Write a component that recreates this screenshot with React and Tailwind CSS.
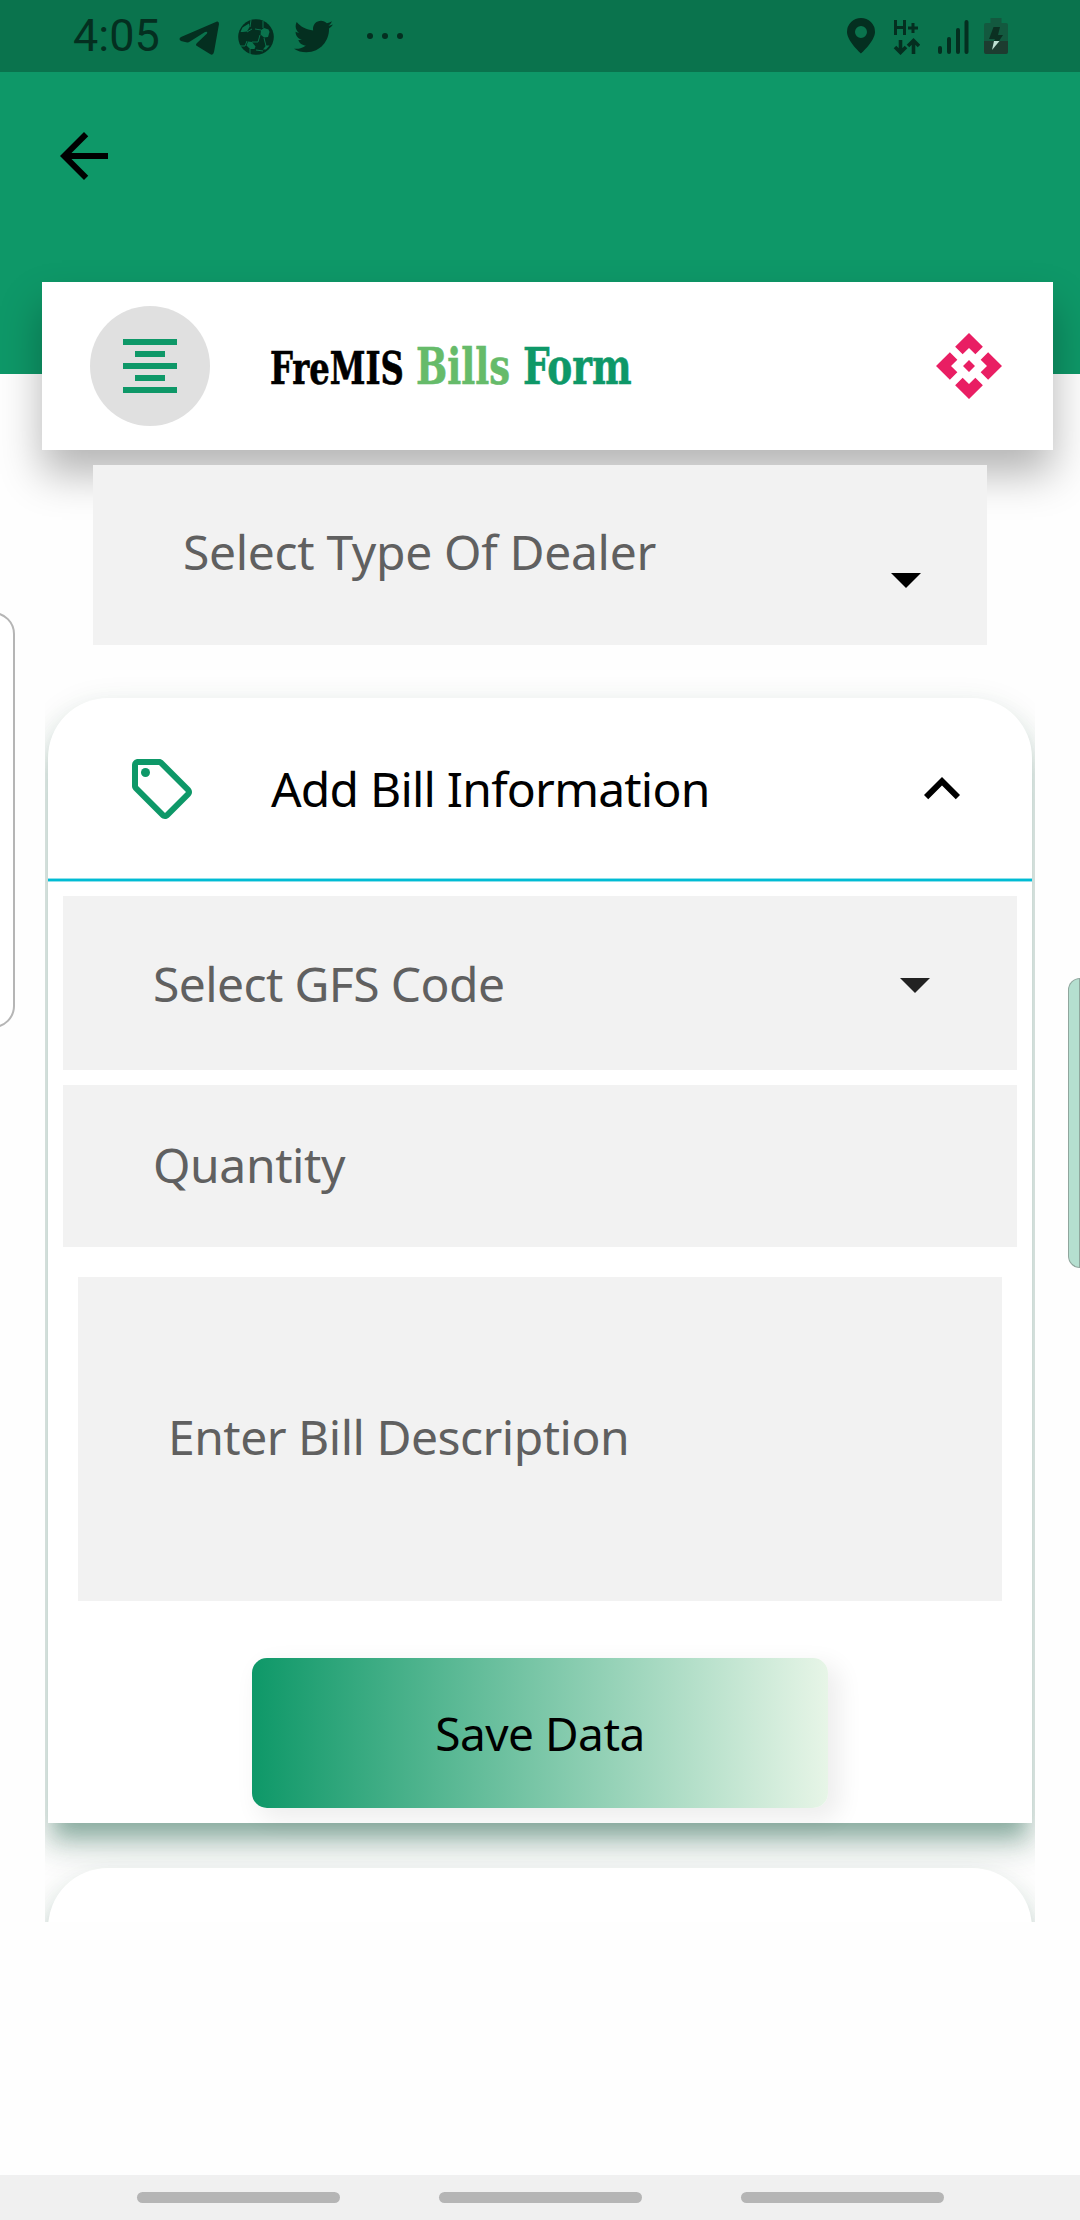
import {
  MdArrowBack, MdFormatAlignCenter, MdApi, MdArrowDropDown, MdOutlineLocalOffer,
  MdExpandLess,
} from "react-icons/md";
import { FaTwitter } from "react-icons/fa";

function StatusBar() {
  return (
    <div className="flex h-[72px] shrink-0 items-center bg-[#0a734d] pl-[73px] pr-[72px] text-[#042f20]">
      <span className="w-[106px] font-['Roboto'] text-[45px] leading-[74px]">4:05</span>
      <svg className="mt-[3px] h-[34px] w-[40px]" viewBox="0 0 40 34" fill="currentColor">
        <path d="M38 .5Q40 0 40 3L35 31Q34 35 31 33L18 25Q16 24 18 22L28 12.500Q29 10 26 11L11 20.500Q9 22 6 21L2 20Q-1 18 2 16Z" />
      </svg>
      <svg className="ml-[19px] mt-[1px] size-[36px]" viewBox="0 0 36 36" fill="none">
        <circle cx="18" cy="18" r="17.800" fill="currentColor" />
        <g fill="#0a734d">
          <path d="M2.500 13L4.500 8.500L11 4.500L11.500 8L9 12.500L5 13z" />
          <path d="M23 11L26 9L30.500 10.500L31.500 13L30 18L26 18.500L22.500 15.500z" />
          <path d="M8.500 26.500L10 22.500L14 23L17.500 27.500L16.500 30L12 30z" />
          <path d="M28 26.500L31.500 26.500L28 30.500L25 30.500z" />
        </g>
        <path d="M12 8L13 1M25 9L25 2M9 13L14 10M23 11L17 10M9 22L7 27H2M22 16L20 23L14 23M26 19L28 27M12 30V35M18 31L25 32" stroke="#0a734d" strokeWidth="1" />
      </svg>
      <FaTwitter className="ml-[20px] size-[39px]" />
      <div className="ml-[34px] flex gap-[9px]">
        <i className="size-[6px] rounded-full bg-current" />
        <i className="size-[6px] rounded-full bg-current" />
        <i className="size-[6px] rounded-full bg-current" />
      </div>
      <svg className="ml-auto h-[36px] w-[28px]" viewBox="0 0 28 36" fill="currentColor" fillRule="evenodd">
        <path d="M14 0a14 14 0 0 0-14 14c0 9 14 21.500 14 21.500s14-12.500 14-21.500a14 14 0 0 0-14-14zm0 8a6 6 0 1 1 0 12a6 6 0 1 1 0-12z" />
      </svg>
      <svg className="ml-[18px] mt-[2px] h-[36px] w-[27px]" viewBox="0 0 27 36" fill="none" stroke="currentColor" strokeWidth="3">
        <path d="M2.500 1v15M11.500 1v15M2.500 8.500h9M15 9h10M20 4v10" />
        <path d="M7.500 21v12M2 28l5.500 5.500L13 28M20.500 35V22M15 27l5.500-5.500L26 27" strokeWidth="3.600" />
      </svg>
      <svg className="ml-[18px] h-[36px] w-[31px]" viewBox="0 0 31 36" stroke="currentColor" strokeWidth="4" strokeLinecap="round">
        <path d="M2 30v4M11 21v13M20 12v22M28.500 4v30" />
      </svg>
      <svg className="ml-[15px] h-[36px] w-[24px]" viewBox="0 0 24 36">
        <path d="M6.500 0h11v5H22q2 0 2 2v16H0V7q0-2 2-2h4.500z" fill="#13593f" />
        <path d="M0 23h24v11q0 2-2 2H2q-2 0-2-2z" fill="#1d3c30" />
        <path d="M9.500 9h6.500l-2 8h5l-4 6H10l1-2H5z" fill="#0b3022" />
        <path d="M10 23h5.500L8 32z" fill="#bfe0d3" />
      </svg>
    </div>
  );
}

function Field({ label, className, labelClass, icon }) {
  return (
    <div className={"flex items-center justify-between bg-[#f2f2f2] text-[48px] text-[#606060] " + className}>
      <span className={"whitespace-nowrap leading-none " + labelClass}>{label}</span>
      {icon}
    </div>
  );
}

const panelShadow =
  "shadow-[0_21px_20px_-9px_rgba(0,77,52,0.27),0_24px_30px_3px_rgba(0,77,52,0.16),0_12px_36px_0px_rgba(0,77,52,0.14)]";

export default function App() {
  return (
    <div className="relative flex h-[2220px] w-[1080px] flex-col overflow-hidden bg-[#fefefe] font-['Noto_Sans',sans-serif] text-black">
      <StatusBar />
      <header className="h-[302px] shrink-0 bg-[#0e9868] pl-[48px] pt-[48px]">
        <MdArrowBack className="size-[72px]" />
      </header>

      <section className="relative ml-[42px] -mt-[92px] flex h-[168px] w-[1011px] shrink-0 items-center bg-white pl-[48px] pr-[48px] shadow-[0_24px_40px_rgba(0,0,0,0.29)]">
        <div className="flex size-[120px] items-center justify-center rounded-full bg-[#e0e0e0]">
          <MdFormatAlignCenter className="size-[72px] text-[#0e9868]" />
        </div>
        <h1 className="ml-[60px] flex items-baseline whitespace-nowrap font-['DejaVu_Serif_Condensed','DejaVu_Serif',serif] font-bold leading-none">
          <span className="w-[146px]"><span className="inline-block origin-left scale-x-[0.797] text-[45px] [-webkit-text-stroke:0.6px_currentColor]">FreMIS</span></span>
          <span className="w-[107px] text-[#66bb6a]"><span className="inline-block origin-left scale-x-[0.805] text-[51px] [-webkit-text-stroke:0.6px_currentColor]">Bills</span></span>
          <span className="text-[#0e9868]"><span className="inline-block origin-left scale-x-[0.815] text-[51px] [-webkit-text-stroke:0.6px_currentColor]">Form</span></span>
        </h1>
        <MdApi className="absolute right-[48px] size-[72px] text-[#e91e63]" />
      </section>

      <Field
        label="Select Type Of Dealer"
        className="relative ml-[93px] mt-[15px] h-[180px] w-[894px] shrink-0 pl-[90px] pr-[45px]"
        labelClass="-mt-[6px] tracking-[-0.33px]"
        icon={<MdArrowDropDown className="mt-[48px] size-[72px] text-black" />}
      />

      <div className="-mt-[1px] ml-[45px] flex h-[1278px] w-[990px] shrink-0 flex-col overflow-hidden px-[3px] pt-[54px]">
        <section className={"h-[1125px] shrink-0 rounded-t-[60px] bg-white " + panelShadow}>
          <div className="flex h-[180px] items-center pl-[78px] pr-[54px] pt-[2px]">
            <MdOutlineLocalOffer className="size-[72px] text-[#0e9868]" />
            <h2 className="ml-[73px] whitespace-nowrap text-[48px] leading-none tracking-[-0.8px]">Add Bill Information</h2>
            <MdExpandLess className="ml-auto size-[72px]" />
          </div>
          <div className="h-[4px] border-y border-[#8fe0ea] bg-[#00bcd4]" />
          <div className="flex flex-col px-[15px] pt-[14px]">
            <Field
              label="Select GFS Code"
              className="h-[174px] pl-[90px] pr-[66px] pt-[2px]"
              labelClass="tracking-[-0.6px]"
              icon={<MdArrowDropDown className="size-[72px] text-[#222222]" />}
            />
            <Field label="Quantity" className="mt-[15px] h-[162px] pb-[3px] pl-[90px]" labelClass="tracking-[-0.4px]" />
            <Field label="Enter Bill Description" className="mx-[15px] mt-[30px] h-[324px] pb-[4px] pl-[90px]" labelClass="tracking-[-0.5px]" />
          </div>
          <button className="ml-[204px] mt-[57px] flex h-[150px] w-[576px] items-center justify-center rounded-[15px] bg-linear-to-r/srgb from-[#0e9868] to-[#e7f5e7] text-[46px] leading-none tracking-[-0.5px] shadow-[9px_9px_24px_3px_rgba(0,0,0,0.07)]">
            Save Data
          </button>
        </section>
        <section className={"mt-[45px] h-[180px] shrink-0 rounded-t-[60px] bg-white " + panelShadow} />
      </div>

      <nav className="mt-auto flex h-[45px] shrink-0 items-center justify-center gap-[99px] bg-[#f0f0f0]">
        <i className="h-[11px] w-[203px] rounded-full bg-[#b5b5b5]" />
        <i className="h-[11px] w-[203px] rounded-full bg-[#b5b5b5]" />
        <i className="h-[11px] w-[203px] rounded-full bg-[#b5b5b5]" />
      </nav>

      <div className="absolute -left-[30px] top-[612px] h-[416px] w-[45px] rounded-[22px] border-2 border-[#b5b5b5] bg-white" />
      <div className="absolute right-0 top-[978px] h-[290px] w-[12px] rounded-l-[12px] border border-[#8fa69d] bg-[#b5dfd0]" />
    </div>
  );
}
